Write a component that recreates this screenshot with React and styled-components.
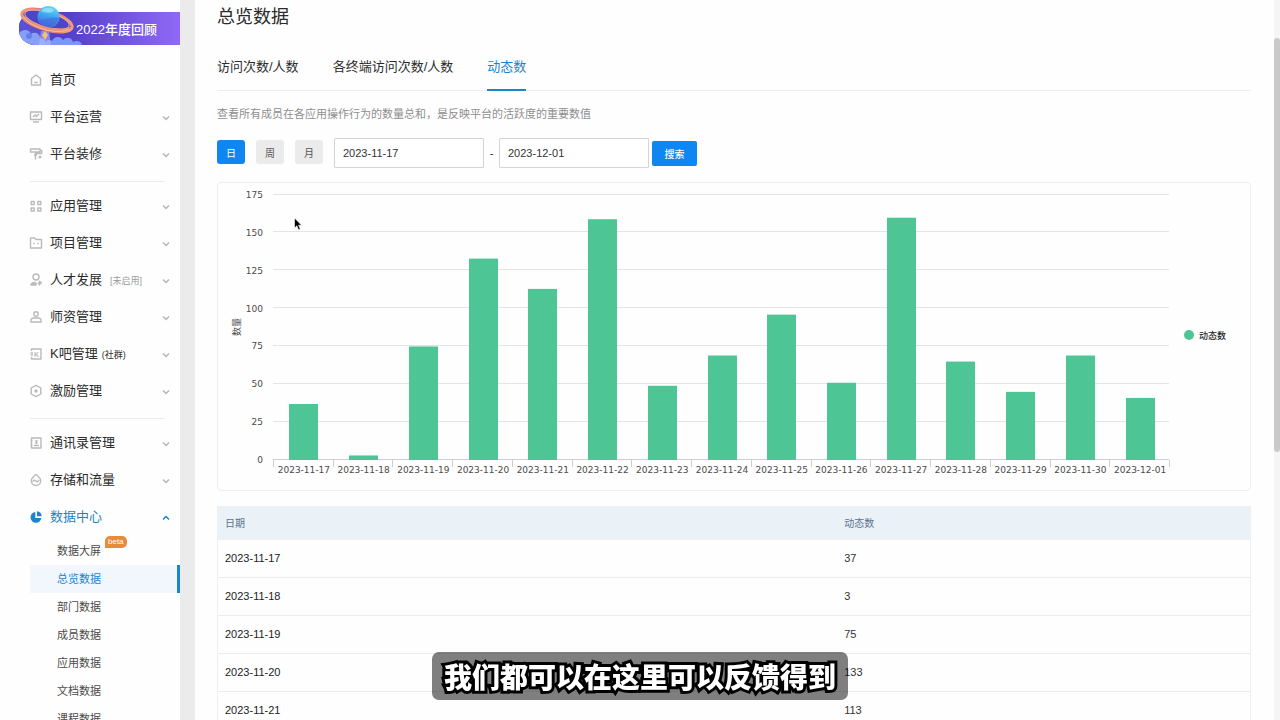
import { Fragment } from 'react';
import styled, { createGlobalStyle } from 'styled-components';

const GlobalStyle = createGlobalStyle`
    * {
        box-sizing: border-box;
    }

    body {
        margin: 0;
        background: #ebebeb;
        color: #333;
        font-family: "Liberation Sans", "Noto Sans CJK SC", sans-serif;
        font-size: 11px;
    }

    button, input {
        font-family: inherit;
    }
`;

const Shell = styled.div`
    display: flex;
    gap: 15px;
    height: 100vh;
    overflow: hidden;
`;

/* ---------- sidebar ---------- */

const Sidebar = styled.aside`
    flex: none;
    width: 180px;
    padding-top: 6px;
    background: #fefefe;
    overflow: hidden;
`;

const Banner = styled.a`
    position: relative;
    display: flex;
    align-items: center;
    height: 33px;
    margin: 6px 0 17px 19px;
    padding-left: 57px;
    border-radius: 16px 0 0 16px;
    background: linear-gradient(90deg, #5440c8 30%, #9069f6);
    color: #fff;
    font-size: 13px;
    font-weight: 500;
    text-decoration: none;

    svg {
        position: absolute;
        left: 0;
        bottom: 0;
    }
`;

const MenuItem = styled.button`
    display: flex;
    align-items: center;
    width: 100%;
    height: 37px;
    padding: 0 10px 1px 29px;
    border: 0;
    background: none;
    color: ${({ $active }) => ($active ? '#1b84cf' : '#2b2b2b')};
    font-size: 13px;
    line-height: 20px;
    text-align: left;
    cursor: pointer;
`;

const MenuIcon = styled.svg`
    flex: none;
    width: 14px;
    height: 14px;
    margin-right: 7px;
    fill: none;
    stroke: ${({ $active }) => ($active ? 'none' : '#bababa')};
    stroke-width: 1.4;
    stroke-linejoin: round;
`;

const Note = styled.small`
    margin-left: ${({ $muted }) => ($muted ? 8 : 4)}px;
    padding-top: 2px;
    color: ${({ $muted }) => ($muted ? '#9a9a9a' : '#2b2b2b')};
    font-size: 9px;
`;

const Chevron = styled.svg`
    flex: none;
    width: 8px;
    height: 6px;
    margin: 2px 0 0 auto;
    fill: none;
    stroke: ${({ $open }) => ($open ? '#1b84cf' : '#b5b5b5')};
    stroke-width: 1.5;
`;

const Divider = styled.hr`
    height: 1px;
    margin: 8px 15px 6px 30px;
    border: 0;
    background: #ececec;
`;

const SubMenu = styled.ul`
    margin: 0;
    padding: 1px 0 0 30px;
    list-style: none;
`;

const SubLink = styled.a`
    display: flex;
    align-items: center;
    height: 28px;
    padding-left: 27px;
    border-right: 3px solid ${({ $active }) => ($active ? '#1b84cf' : 'transparent')};
    background: ${({ $active }) => ($active ? '#f1f7fd' : 'none')};
    color: ${({ $active }) => ($active ? '#1b84cf' : '#4a4a4a')};
    font-size: 11px;
    line-height: 16px;
    text-decoration: none;
`;

const SubText = styled.span`
    position: relative;
`;

const Beta = styled.span`
    position: absolute;
    left: 100%;
    bottom: 11px;
    margin-left: 4px;
    padding: 0 3px;
    border-radius: 5px 5px 5px 0;
    background: #e98b3d;
    color: #fff;
    font-size: 8px;
    line-height: 12px;
`;

/* ---------- main column ---------- */

const Main = styled.main`
    flex: 1;
    min-width: 0;
    padding: 4px 8px 0 22px;
    background: #fefefe;
`;

const Content = styled.div`
    margin-right: 15px;
`;

const Title = styled.h1`
    margin: 0;
    font-size: 18px;
    font-weight: 400;
    line-height: 26px;
    color: #2b2b2b;
`;

const Tabs = styled.div`
    display: flex;
    gap: 34px;
    margin-top: 13px;
    border-bottom: 1px solid #eee;
`;

const Tab = styled.button`
    height: 48px;
    margin-bottom: -1px;
    padding: 0 0 1px;
    border: 0;
    border-bottom: 2px solid ${({ $active }) => ($active ? '#1b84cf' : 'transparent')};
    background: none;
    color: ${({ $active }) => ($active ? '#1b84cf' : '#2b2b2b')};
    font-size: 13px;
    cursor: pointer;
`;

const Description = styled.p`
    margin: 14px 0 15px;
    color: #8e8e8e;
    font-size: 11px;
    line-height: 18px;
`;

const Filters = styled.form`
    display: flex;
    align-items: center;
`;

const Period = styled.button`
    width: 28px;
    height: 24px;
    margin: 0 11px 2px 0;
    padding: 0;
    border: 0;
    border-radius: 3px;
    background: ${({ $active }) => ($active ? '#0f86f2' : '#ebebeb')};
    color: ${({ $active }) => ($active ? '#fff' : '#555')};
    font-size: 10px;
`;

const DateInput = styled.input`
    width: 150px;
    height: 30px;
    padding: 0 8px;
    border: 1px solid #d4d4d4;
    border-radius: 1px;
    background: #fff;
    color: #333;
    font-size: 11px;
`;

const Dash = styled.span`
    width: 15px;
    text-align: center;
`;

const SearchButton = styled.button`
    width: 45px;
    height: 25px;
    margin-left: 3px;
    padding: 0;
    border: 0;
    border-radius: 2px;
    background: #0f86f2;
    color: #fff;
    font-size: 10px;
    font-weight: 500;
`;

const ChartPanel = styled.section`
    position: relative;
    margin-top: 14px;
    border: 1px solid #efefef;
    border-radius: 4px;
`;

const ChartSvg = styled.svg`
    display: block;
    width: 100%;
    font-family: "DejaVu Sans", "Noto Sans CJK SC", sans-serif;
    font-size: 9px;
    fill: #4a4a4a;
`;

const Cursor = styled.svg`
    position: absolute;
    left: 75px;
    top: 34px;
`;

const Table = styled.table`
    width: 100%;
    margin-top: 15px;
    border-collapse: separate;
    border-spacing: 0;
    border-left: 1px solid #efefef;
    border-right: 1px solid #efefef;
    table-layout: fixed;

    th, td {
        padding: 0 7px 1px;
        text-align: left;
        font-size: 11px;
        font-weight: 400;
    }

    th {
        height: 34px;
        background: #eaf2f7;
        color: #5c7190;
        font-size: 10px;
    }

    td {
        height: 38px;
        border-bottom: 1px solid #ececec;
    }

    td:first-child {
        color: #222;
    }

    th:first-child {
        width: 60%;
    }
`;

const ScrollTrack = styled.div`
    flex: none;
    display: grid;
    grid-template-rows: 38fr 414fr 268fr;
    width: 6px;
    margin-left: -15px;
    background: #f5f5f5;
`;

const ScrollThumb = styled.div`
    grid-row: 2;
    border-radius: 3px;
    background: #cacaca;
`;

const Caption = styled.p`
    position: fixed;
    left: 50%;
    bottom: 20px;
    margin: 0;
    padding: 0 12px;
    transform: translateX(-50%);
    border-radius: 7px;
    background: rgba(0, 0, 0, 0.5);
    color: #fff;
    font-family: "Noto Sans CJK SC", sans-serif;
    font-size: 28px;
    font-weight: 900;
    line-height: 48px;
    white-space: nowrap;
    -webkit-text-stroke: 6px #000;
    paint-order: stroke fill;
    stroke-linejoin: round;
`;

const icons = {
    home: <path d="M2.500 5.500 7 2l4.500 3.500V12h-9zM5.300 9.500h3.400" />,
    monitor: <path d="M1.500 2h11v7.500h-11zM4 7l2-2 1.500 1.500L10 4M4 12h6" />,
    roller: <path d="M1.500 2h9.500v3h-9.500zM11 3.500h1.700v3H6.500v6M5 8h3M9.500 10h3M11 8.500v3" />,
    grid: <path d="M2.200 2.500h3v3h-3zM8.800 2.500h3v3h-3zM2.200 9h3v3h-3zM8.800 9h3v3h-3z" />,
    folder: <path d="M1.500 2h4l1.500 1.500h5.500v8.500h-11zM4.300 7.500h1.500M8.300 7.500h1.500" />,
    talent: (
        <>
            <circle cx="7" cy="4" r="3" />
            <path d="M2 11.300c1-2 3.500-2.200 5-1v1.700H2z" fill="#bababa" />
            <path d="M8.500 10.500h4M10.500 12.500V8.300l2 1.500" />
        </>
    ),
    teacher: (
        <>
            <circle cx="7" cy="4" r="2.200" />
            <path d="M2 12c-.5-2.600.8-4 3-4h4c2.200 0 3.500 1.400 3 4z" />
        </>
    ),
    kbar: (
        <>
            <path d="M2.500 4V2H12v10H2.500v-2M1.500 6h2.500M1.500 8h2.500" />
            <text x="5" y="9.500" fontSize="7" fontWeight="700" fill="#bababa" stroke="none">K</text>
        </>
    ),
    hexagon: (
        <>
            <path d="M7 1.400 11.800 4v6L7 12.600 2.200 10V4z" />
            <circle cx="7" cy="7" r="1" fill="#bababa" />
        </>
    ),
    contacts: (
        <>
            <path d="M2.500 2H12v10H2.500zM1.500 4.500h2M1.500 9.500h2M5 9.500h4.800" />
            <path d="M7.400 4v4" strokeWidth="2" />
        </>
    ),
    drop: <path d="M7 1.500c2 1.700 4.700 3.600 4.700 6.300a4.700 4.700 0 0 1-9.400 0C2.300 5.100 5 3.200 7 1.500zM3.500 8.500 5.500 7l2.500 2 2.300-2" />,
    pie: (
        <>
            <path d="M6.300 2v6h6a5.400 5.400 0 1 1-6-6z" fill="#1b84cf" />
            <path d="M8 1.300a5.300 5.300 0 0 1 4.700 5H8z" fill="#1b84cf" />
        </>
    ),
};

const menu = [
    [
        { label: '首页', icon: 'home', leaf: true },
        { label: '平台运营', icon: 'monitor' },
        { label: '平台装修', icon: 'roller' },
    ],
    [
        { label: '应用管理', icon: 'grid' },
        { label: '项目管理', icon: 'folder' },
        { label: '人才发展', icon: 'talent', note: '[未启用]', muted: true },
        { label: '师资管理', icon: 'teacher' },
        { label: 'K吧管理', icon: 'kbar', note: '(社群)' },
        { label: '激励管理', icon: 'hexagon' },
    ],
    [
        { label: '通讯录管理', icon: 'contacts' },
        { label: '存储和流量', icon: 'drop' },
        { label: '数据中心', icon: 'pie', active: true },
    ],
];

const subMenu = ['数据大屏', '总览数据', '部门数据', '成员数据', '应用数据', '文档数据', '课程数据'];

const tabs = ['访问次数/人数', '各终端访问次数/人数', '动态数'];

const PAGE_SIZE = 5;

const data = [
    ['2023-11-17', 37],
    ['2023-11-18', 3],
    ['2023-11-19', 75],
    ['2023-11-20', 133],
    ['2023-11-21', 113],
    ['2023-11-22', 159],
    ['2023-11-23', 49],
    ['2023-11-24', 69],
    ['2023-11-25', 96],
    ['2023-11-26', 51],
    ['2023-11-27', 160],
    ['2023-11-28', 65],
    ['2023-11-29', 45],
    ['2023-11-30', 69],
    ['2023-12-01', 41],
];

function Planet() {
    return (
        <svg width="84" height="40" viewBox="0 0 84 40" aria-hidden="true">
            <defs>
                <linearGradient id="planet" x1="0.6" y1="0" x2="0.3" y2="1">
                    <stop offset="0" stopColor="#62d8f6" />
                    <stop offset="0.45" stopColor="#3fa4f0" />
                    <stop offset="1" stopColor="#4a55dc" />
                </linearGradient>
                <linearGradient id="ring" x1="0" y1="0" x2="1" y2="0">
                    <stop offset="0" stopColor="#f2957c" />
                    <stop offset="0.5" stopColor="#dd6f6c" />
                    <stop offset="1" stopColor="#f4a07c" />
                </linearGradient>
                <clipPath id="pill">
                    <path d="M16 7h68v33H16a16 16 0 0 1 0-33z" />
                </clipPath>
            </defs>
            <g clipPath="url(#pill)">
                <path d="M0 7h30v33H0z" fill="#5a50d2" />
                <path d="M0 28c5-5 10-3 12 1 4-3 9 0 9 4 4 0 6 3 6 7H0z" fill="#86a0f8" />
                <path d="M25 40c1-5 5-6 8-4 2-5 9-5 11-1 4-4 9-2 10 2 4-2 8-1 9 3z" fill="#7897f8" />
                <circle cx="10" cy="31" r="3" fill="#6480f0" />
                <path d="M22 26h8l2 14H20z" fill="#b6bfff" opacity="0.5" />
                <path d="m26 26 3 4-3 5-3-5z" fill="#f0c274" />
            </g>
            <ellipse cx="28" cy="15.500" rx="26" ry="9.500" transform="rotate(16 28 15.500)" fill="#4d45c4" stroke="url(#ring)" strokeWidth="3" />
            <ellipse cx="28" cy="14.500" rx="23" ry="7.500" transform="rotate(16 28 14.500)" fill="none" stroke="#f3b09a" />
            <circle cx="29.500" cy="12" r="11" fill="url(#planet)" />
            <path d="M22 6c3-4 10-4 13-1-2 4-8 3-13 1z" fill="#9ceafa" opacity="0.7" />
            <path d="M20 15c6 1 10-4 20-2-2 6-6 9-11 9-4 0-7-3-9-7z" fill="#4269e0" opacity="0.6" />
            <path d="M2 6c2 6 11 12 23 15 12 4 24 4 29-1-1 6-13 9-29 5C10 21 0 12 2 6z" fill="#ee8f79" />
            <path d="M4 12c5 6 13 10 23 13 9 2 18 2 23-1" fill="none" stroke="#f9bf9d" />
        </svg>
    );
}

// plot area inside the 1032x307 drawing
const LEFT = 55;
const WIDTH = 896;
const TOP = 12;
const BASE = 277;
const MAX = 175;
const BAR = 29;

function BarChart() {
    const step = WIDTH / data.length;
    const toY = (value) => BASE - (value / MAX) * (BASE - TOP);
    const ticks = [0, 25, 50, 75, 100, 125, 150, 175];

    return (
        <ChartSvg viewBox="0 0 1032 307" role="img" aria-label="动态数">
            {ticks.map((tick) => (
                <Fragment key={tick}>
                    <path d={`M${LEFT} ${Math.floor(toY(tick)) - 0.5}h${WIDTH}`} stroke={tick ? '#e4e4e4' : '#cfcfcf'} />
                    <text x="45" y={toY(tick) + 3} textAnchor="end">{tick}</text>
                </Fragment>
            ))}
            {data.map(([date, value], i) => {
                const center = LEFT + 1 + step * (i + 0.5);
                return (
                    <Fragment key={date}>
                        <rect x={Math.round(center - BAR / 2)} y={toY(value)} width={BAR} height={BASE - toY(value)} fill="#4dc595" />
                        <text x={center} y="290" textAnchor="middle">{date}</text>
                    </Fragment>
                );
            })}
            {Array.from({ length: data.length + 1 }, (_, i) => (
                <path key={i} d={`M${Math.round(LEFT + step * i) + 0.5} ${BASE}v7`} stroke="#cfcfcf" />
            ))}
            <text transform="translate(22 144) rotate(-90)" textAnchor="middle">数量</text>
            <circle cx="971" cy="152" r="5" fill="#4dc595" />
            <text x="981" y="156" fill="#222" fontWeight="500">动态数</text>
        </ChartSvg>
    );
}

function Menu() {
    return (
        <nav>
            {menu.map((group, i) => (
                <Fragment key={group[0].label}>
                    {i > 0 && <Divider />}
                    {group.map((item) => (
                        <MenuItem key={item.label} type="button" $active={item.active}>
                            <MenuIcon viewBox="0 0 14 14" $active={item.active}>{icons[item.icon]}</MenuIcon>
                            {item.label}
                            {item.note && <Note $muted={item.muted}>{item.note}</Note>}
                            {!item.leaf && (
                                <Chevron viewBox="0 0 8 6" $open={item.active}>
                                    <path d={item.active ? 'M1 4.500 4 1.500l3 3' : 'M1 1.500l3 3 3-3'} />
                                </Chevron>
                            )}
                        </MenuItem>
                    ))}
                </Fragment>
            ))}
            <SubMenu>
                {subMenu.map((label, i) => (
                    <li key={label}>
                        <SubLink href="#" $active={i === 1}>
                            <SubText>
                                {label}
                                {i === 0 && <Beta>beta</Beta>}
                            </SubText>
                        </SubLink>
                    </li>
                ))}
            </SubMenu>
        </nav>
    );
}

export default function App() {
    return (
        <>
            <GlobalStyle />
            <Shell>
                <Sidebar>
                    <Banner href="#">
                        <Planet />
                        2022年度回顾
                    </Banner>
                    <Menu />
                </Sidebar>
                <Main>
                    <Content>
                        <Title>总览数据</Title>
                        <Tabs role="tablist">
                            {tabs.map((tab, i) => (
                                <Tab key={tab} type="button" role="tab" aria-selected={i === 2} $active={i === 2}>{tab}</Tab>
                            ))}
                        </Tabs>
                        <Description>查看所有成员在各应用操作行为的数量总和，是反映平台的活跃度的重要数值</Description>
                        <Filters onSubmit={(e) => e.preventDefault()}>
                            <Period type="button" $active>日</Period>
                            <Period type="button">周</Period>
                            <Period type="button">月</Period>
                            <DateInput aria-label="开始日期" defaultValue="2023-11-17" />
                            <Dash>-</Dash>
                            <DateInput aria-label="结束日期" defaultValue="2023-12-01" />
                            <SearchButton type="submit">搜索</SearchButton>
                        </Filters>
                        <ChartPanel>
                            <BarChart />
                            <Cursor width="10" height="14" viewBox="0 0 10 14" aria-hidden="true">
                                <path d="M1.500 1v10l2.300-2.200 1.700 4 1.800-.8-1.700-3.800h3z" fill="#000" stroke="#fff" strokeWidth="0.6" />
                            </Cursor>
                        </ChartPanel>
                        <Table>
                            <thead>
                                <tr>
                                    <th>日期</th>
                                    <th>动态数</th>
                                </tr>
                            </thead>
                            <tbody>
                                {data.slice(0, PAGE_SIZE).map(([date, value]) => (
                                    <tr key={date}>
                                        <td>{date}</td>
                                        <td>{value}</td>
                                    </tr>
                                ))}
                            </tbody>
                        </Table>
                    </Content>
                </Main>
                <ScrollTrack>
                    <ScrollThumb />
                </ScrollTrack>
            </Shell>
            <Caption>我们都可以在这里可以反馈得到</Caption>
        </>
    );
}
